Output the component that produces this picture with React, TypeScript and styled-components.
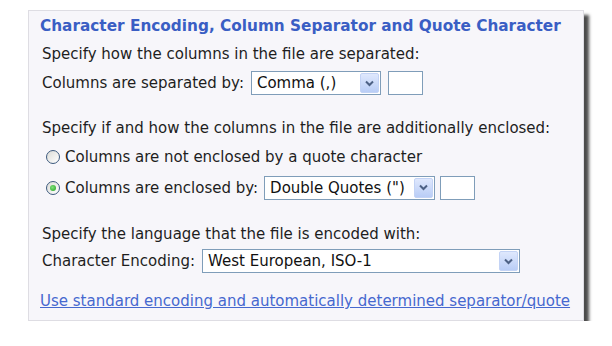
import styled, { createGlobalStyle } from 'styled-components';

const GlobalStyle = createGlobalStyle`
  html, body {
    margin: 0;
    padding: 0;
    background: #ffffff;
  }
  body {
    font-family: 'DejaVu Sans', Verdana, sans-serif;
    font-size: 15px;
    color: #1e1e1e;
  }
`;

type IRow = {
  $height: number;
  $top?: number;
};

type IBox = {
  $width: number;
};

const ChevronIcon = () => (
  <svg width="9" height="7" viewBox="0 0 9 7">
    <path d="M1 1.5 L4.5 5 L8 1.5" fill="none" stroke="#4d6185" strokeWidth="2" />
  </svg>
);

const Select = ({ value, width }: { value: string; width: number }) => (
  <SelectBox $width={width}>
    <SelectValue>{value}</SelectValue>
    <DropButton>
      <ChevronIcon />
    </DropButton>
  </SelectBox>
);

const Radio = ({ checked }: { checked?: boolean }) => (
  <RadioCircle>{checked && <RadioDot />}</RadioCircle>
);

const App = (): JSX.Element => {
  return (
    <>
      <GlobalStyle />
      <Panel>
        <Title>Character Encoding, Column Separator and Quote Character</Title>

        <Line $height={26}>Specify how the columns in the file are separated:</Line>
        <Line $height={34}>
          Columns are separated by:
          <Select value="Comma (,)" width={130} />
          <TextBox $width={35} />
        </Line>

        <Line $height={28} $top={14}>
          Specify if and how the columns in the file are additionally enclosed:
        </Line>
        <RadioRow $height={30}>
          <Radio />
          Columns are not enclosed by a quote character
        </RadioRow>
        <RadioRow $height={32}>
          <Radio checked />
          Columns are enclosed by:
          <Select value={'Double Quotes (")'} width={171} />
          <TextBox $width={35} />
        </RadioRow>

        <Line $height={26} $top={18}>
          Specify the language that the file is encoded with:
        </Line>
        <Line $height={28}>
          Character Encoding:
          <Select value="West European, ISO-1" width={318} />
        </Line>

        <LinkRow $height={26} $top={13}>
          <StyledLink href="#">Use standard encoding and automatically determined separator/quote</StyledLink>
        </LinkRow>
      </Panel>
    </>
  );
};

export default App;

const Panel = styled.div`
  display: flex;
  flex-direction: column;
  width: 556px;
  height: 311px;
  box-sizing: border-box;
  margin: 10px 0 0 28px;
  padding: 0 0 6px 11px;
  background: #f7f6fa;
  border: 1px solid #dedde3;
  box-shadow: 5px 5px 3px rgba(0, 0, 0, 0.7);
`;

const Title = styled.div`
  height: 30px;
  display: flex;
  align-items: center;
  font-weight: bold;
  font-size: 15.3px;
  color: #3a5ec4;
  white-space: nowrap;
`;

const Line = styled.div<IRow>`
  display: flex;
  align-items: center;
  gap: 7px;
  height: ${props => props.$height}px;
  margin-top: ${props => props.$top ?? 0}px;
  padding-left: 2px;
  white-space: nowrap;
`;

const RadioRow = styled(Line)`
  padding-left: 6px;
  gap: 0;

  & > span:first-child {
    margin-right: 5px;
  }
`;

const LinkRow = styled(Line)`
  padding-left: 0;
`;

const StyledLink = styled.a`
  color: #4668cf;
  text-decoration: underline;
`;

const SelectBox = styled.span<IBox>`
  display: inline-flex;
  align-items: stretch;
  box-sizing: border-box;
  width: ${props => props.$width}px;
  height: 24px;
  border: 1px solid #7f9db9;
  background: #ffffff;

  ${RadioRow} & {
    margin-left: 6px;
  }
`;

const SelectValue = styled.span`
  flex: 1;
  display: flex;
  align-items: center;
  padding-left: 5px;
  color: #111;
`;

const DropButton = styled.span`
  width: 17px;
  margin: 1px;
  display: flex;
  align-items: center;
  justify-content: center;
  background: linear-gradient(#dfe8fd, #b9cdf6);
  border: 1px solid #c3d3f5;
  border-radius: 2px;
`;

const TextBox = styled.span<IBox>`
  display: inline-block;
  box-sizing: border-box;
  width: ${props => props.$width}px;
  height: 24px;
  border: 1px solid #7f9db9;
  background: #ffffff;

  ${RadioRow} & {
    margin-left: 5px;
  }
`;

const RadioCircle = styled.span`
  display: inline-flex;
  align-items: center;
  justify-content: center;
  box-sizing: border-box;
  width: 14px;
  height: 14px;
  border-radius: 50%;
  border: 1px solid #3d5a7e;
  background: linear-gradient(135deg, #dcdcd7, #ffffff);
`;

const RadioDot = styled.span`
  width: 6px;
  height: 6px;
  border-radius: 50%;
  background: radial-gradient(circle at 40% 40%, #7fe07a, #21a121);
`;
